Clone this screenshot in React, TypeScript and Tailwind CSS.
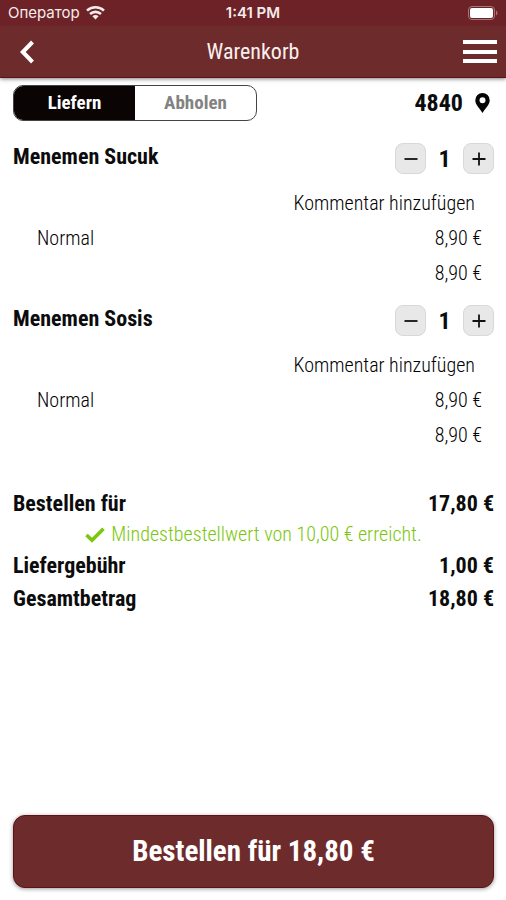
import React, { useState } from 'react';

type CartItem = {
  id: string;
  name: string;
  variant: string;
  price: string;
  total: string;
};

const items: CartItem[] = [
  { id: 'sucuk', name: 'Menemen Sucuk', variant: 'Normal', price: '8,90 €', total: '8,90 €' },
  { id: 'sosis', name: 'Menemen Sosis', variant: 'Normal', price: '8,90 €', total: '8,90 €' },
];

function StatusBar() {
  return (
    <div className="grid grid-cols-3 items-center h-[26px] px-2 bg-[#6c2226] text-[#f5eceb] font-['Inter',sans-serif] text-[15px]">
      <div className="flex items-center gap-[6px]">
        <span>Оператор</span>
        <svg className="w-[19px] h-[14px]" viewBox="0 0 19 14" fill="none" stroke="currentColor" strokeWidth="2.6">
          <path d="M1 4.6C5.8 0.2 13.2 0.2 18 4.6" />
          <path d="M4 8C7.2 5.1 11.8 5.1 15 8" />
          <path d="M9.5 13.5L6.4 10.3C8.2 8.7 10.8 8.7 12.6 10.3Z" fill="currentColor" stroke="none" />
        </svg>
      </div>
      <span className="text-center font-semibold">1:41 PM</span>
      <svg className="w-[30px] h-[14px] justify-self-end" viewBox="0 0 30 14">
        <rect x="0.5" y="0.5" width="26" height="13" rx="3.5" fill="none" stroke="#a67679" />
        <rect x="2" y="2" width="23" height="10" rx="2" fill="#fff" />
        <path d="M28 4.5C30 5.5 30 8.5 28 9.5Z" fill="#a67679" />
      </svg>
    </div>
  );
}

function Header() {
  return (
    <header className="shadow-[0_1px_4px_rgba(0,0,0,0.5)]">
      <StatusBar />
      <div className="grid grid-cols-3 items-center h-[52px] px-[9px] bg-[#6e2b2c] border-b border-[#5e1216]">
        <button type="button" aria-label="Zurück" className="justify-self-start px-[9px]">
          <svg className="w-4 h-6" viewBox="0 0 16 24" fill="none" stroke="#fff" strokeWidth="4">
            <path d="M14.5 2L4.8 12L14.5 22" />
          </svg>
        </button>
        <h1 className="text-center text-[22px] text-[#faf1ef]">Warenkorb</h1>
        <button type="button" aria-label="Menü" className="justify-self-end">
          <svg className="w-[34px] h-6" viewBox="0 0 34 24" fill="#fff">
            <rect y="0" width="34" height="4" />
            <rect y="10" width="34" height="4" />
            <rect y="19" width="34" height="4" />
          </svg>
        </button>
      </div>
    </header>
  );
}

function Stepper() {
  const [count, setCount] = useState(1);
  const button = 'flex items-center justify-center w-[31px] h-[31px] rounded-lg border border-[#d8d8d8] bg-[#e8e8e8]';

  return (
    <div className="flex items-center">
      <button type="button" aria-label="Weniger" className={button} onClick={() => setCount(Math.max(0, count - 1))}>
        <svg className="w-[14px] h-[14px]" viewBox="0 0 14 14" stroke="#111" strokeWidth="1.8">
          <path d="M0.5 7H13.5" />
        </svg>
      </button>
      <span className="w-[37px] text-center text-[24px] leading-[28px] font-bold">{count}</span>
      <button type="button" aria-label="Mehr" className={button} onClick={() => setCount(count + 1)}>
        <svg className="w-[14px] h-[14px]" viewBox="0 0 14 14" stroke="#111" strokeWidth="1.8">
          <path d="M0.5 7H13.5M7 0.5V13.5" />
        </svg>
      </button>
    </div>
  );
}

function CartRow({ item }: { item: CartItem }) {
  return (
    <section className="pt-1 pb-[10px]">
      <div className="flex items-start justify-between h-[43px]">
        <h2 className="text-[22px] leading-[28px] font-bold">{item.name}</h2>
        <Stepper />
      </div>
      <div className="text-[20px] leading-[35px] font-light text-black">
        <div className="flex justify-end pr-[19px]">
          <button type="button">Kommentar hinzufügen</button>
        </div>
        <div className="flex justify-between pl-6 pr-3">
          <span>{item.variant}</span>
          <span>{item.price}</span>
        </div>
        <div className="flex justify-end pr-3">{item.total}</div>
      </div>
    </section>
  );
}

export default function App() {
  const [mode, setMode] = useState('liefern');

  return (
    <div className="flex flex-col min-h-screen bg-white text-[#0c0c0c] font-['Roboto_Condensed','Liberation_Sans_Narrow',Roboto,sans-serif]">
      <Header />

      <main className="flex flex-col grow pl-[13px] pr-3 pt-[7px] pb-3">
        {/* Delivery mode and postcode */}
        <div className="flex items-center justify-between">
          <div className="grid grid-cols-2 w-[244px] h-9 rounded-[10px] border border-[#444] overflow-hidden text-[19px] font-bold">
            <button
              type="button"
              className={mode === 'liefern' ? 'bg-[#0b0405] text-white' : 'text-[#828282]'}
              onClick={() => setMode('liefern')}
            >
              Liefern
            </button>
            <button
              type="button"
              className={mode === 'abholen' ? 'bg-[#0b0405] text-white' : 'text-[#828282]'}
              onClick={() => setMode('abholen')}
            >
              Abholen
            </button>
          </div>
          <button type="button" className="flex items-center gap-3 pr-1 text-[24px] font-bold">
            4840
            <svg className="w-[15px] h-5" viewBox="0 0 15 20" fill="#050505">
              <path fillRule="evenodd" d="M7.5 0A7.2 7.2 0 0 0 0.3 7.2C0.3 12 4.5 15 7.5 20C10.5 15 14.7 12 14.7 7.2A7.2 7.2 0 0 0 7.5 0ZM7.5 4.2A3 3 0 1 1 7.5 10.2A3 3 0 0 1 7.5 4.2Z" />
            </svg>
          </button>
        </div>

        <div className="pt-[18px]">
          {items.map((item) => (
            <CartRow key={item.id} item={item} />
          ))}
        </div>

        {/* Totals */}
        <div className="pt-6 pb-6 text-[22px] leading-[33px] font-bold">
          <div className="flex justify-between">
            <span>Bestellen für</span>
            <span>17,80 €</span>
          </div>
          <p className="flex items-center justify-center gap-[6px] text-[20px] leading-[29px] font-light text-[#7ac70c]">
            <svg className="w-5 h-4" viewBox="0 0 20 16" fill="none" stroke="currentColor" strokeWidth="3.6">
              <path d="M1.5 8L7 13.2L18.5 1.8" />
            </svg>
            Mindestbestellwert von 10,00 € erreicht.
          </p>
          <div className="flex justify-between">
            <span>Liefergebühr</span>
            <span>1,00 €</span>
          </div>
          <div className="flex justify-between">
            <span>Gesamtbetrag</span>
            <span>18,80 €</span>
          </div>
        </div>

        <button
          type="button"
          className="mt-auto h-[73px] rounded-xl border border-[#5e1216] bg-[#6e2b2c] text-white text-[29px] font-bold shadow-[0_1px_4px_rgba(0,0,0,0.4)]"
        >
          Bestellen für 18,80 €
        </button>
      </main>
    </div>
  );
}
